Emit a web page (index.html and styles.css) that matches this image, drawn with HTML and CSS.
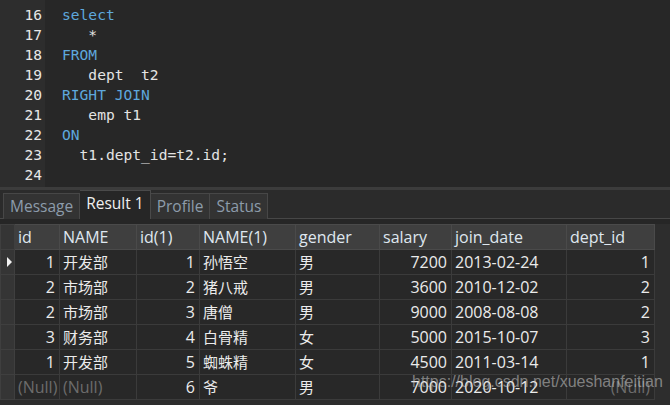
FILE: index.html
```
<!DOCTYPE html>
<html>
<head>
<meta charset="utf-8">
<link rel="stylesheet" href="styles.css">
</head>
<body>
<div class="app">
  <div class="editor">
    <div class="gutter">
      <div>16</div><div>17</div><div>18</div><div>19</div><div>20</div><div>21</div><div>22</div><div>23</div><div>24</div>
    </div>
    <div class="code">
      <div class="line"><span class="kw">select</span></div>
      <div class="line">   *</div>
      <div class="line"><span class="kw">FROM</span></div>
      <div class="line">   dept  t2</div>
      <div class="line"><span class="kw">RIGHT JOIN</span></div>
      <div class="line">   emp t1</div>
      <div class="line"><span class="kw">ON</span></div>
      <div class="line">  t1.dept_id=t2.id;</div>
      <div class="line"> </div>
    </div>
  </div>
  <div class="split"></div>
  <div class="tabbar">
    <div class="tab">Message</div>
    <div class="tab active">Result 1</div>
    <div class="tab">Profile</div>
    <div class="tab">Status</div>
  </div>
  <div class="gridwrap">
    <table class="grid">
      <colgroup>
        <col class="c0"><col class="c1"><col class="c2"><col class="c3"><col class="c4"><col class="c5"><col class="c6"><col class="c7"><col class="c8">
      </colgroup>
      <thead>
        <tr><th class="ind"></th><th>id</th><th>NAME</th><th>id(1)</th><th>NAME(1)</th><th>gender</th><th>salary</th><th>join_date</th><th>dept_id</th></tr>
      </thead>
      <tbody>
        <tr><td class="ind"><span class="arrow"></span></td><td class="num">1</td><td class="cjk">开发部</td><td class="num">1</td><td class="cjk">孙悟空</td><td class="cjk">男</td><td class="num">7200</td><td>2013-02-24</td><td class="num">1</td></tr>
        <tr><td class="ind"></td><td class="num">2</td><td class="cjk">市场部</td><td class="num">2</td><td class="cjk">猪八戒</td><td class="cjk">男</td><td class="num">3600</td><td>2010-12-02</td><td class="num">2</td></tr>
        <tr><td class="ind"></td><td class="num">2</td><td class="cjk">市场部</td><td class="num">3</td><td class="cjk">唐僧</td><td class="cjk">男</td><td class="num">9000</td><td>2008-08-08</td><td class="num">2</td></tr>
        <tr><td class="ind"></td><td class="num">3</td><td class="cjk">财务部</td><td class="num">4</td><td class="cjk">白骨精</td><td class="cjk">女</td><td class="num">5000</td><td>2015-10-07</td><td class="num">3</td></tr>
        <tr><td class="ind"></td><td class="num">1</td><td class="cjk">开发部</td><td class="num">5</td><td class="cjk">蜘蛛精</td><td class="cjk">女</td><td class="num">4500</td><td>2011-03-14</td><td class="num">1</td></tr>
        <tr><td class="ind"></td><td class="num null">(Null)</td><td class="null">(Null)</td><td class="num">6</td><td class="cjk">爷</td><td class="cjk">男</td><td class="num">7000</td><td>2020-10-12</td><td class="num null">(Null)</td></tr>
      </tbody>
    </table>
    <div class="watermark">https://blog.csdn.net/xueshanfeitian</div>
  </div>
</div>
</body>
</html>
```
FILE: styles.css
```
html, body {
  margin: 0;
  padding: 0;
}
body {
  width: 670px;
  height: 405px;
  overflow: hidden;
  background: #262626;
}
.app {
  display: flex;
  flex-direction: column;
  width: 670px;
  height: 405px;
}
.editor {
  display: flex;
  height: 187px;
  flex: none;
  background: #272727;
  font-family: "DejaVu Sans Mono", "Liberation Mono", monospace;
  font-size: 14.6px;
  line-height: 20px;
  color: #e4e4e4;
}
.gutter {
  width: 45px;
  box-sizing: border-box;
  padding: 5px 3px 0 0;
  background: #2d2d2d;
  text-align: right;
  color: #e8e8e8;
}
.code {
  padding: 5px 0 0 17px;
}
.line {
  white-space: pre;
  height: 20px;
}
.kw {
  color: #5ea8dd;
}
.split {
  height: 3px;
  flex: none;
  background: #3c3c3c;
}
.tabbar {
  display: flex;
  flex: none;
  align-items: flex-end;
  height: 29px;
  box-sizing: border-box;
  padding-left: 3px;
  background: #2b2b2b;
  border-bottom: 1px solid #474747;
  font-family: "Open Sans", "Noto Sans", sans-serif;
  font-size: 15.5px;
}
.tab {
  height: 26px;
  box-sizing: border-box;
  padding: 0 6px;
  line-height: 24px;
  background: #333333;
  border: 1px solid #474747;
  border-bottom: none;
  color: #8d9cab;
  margin-bottom: -1px;
}
.tab.active {
  height: 29px;
  line-height: 25px;
  background: #262626;
  color: #f0f0f0;
  position: relative;
  z-index: 1;
  border-color: #4a4a4a;
}
.tab + .tab {
  border-left: none;
}
.gridwrap {
  position: relative;
  margin-top: 5px;
  flex: 1;
  background: #2d2d2d;
}
.grid {
  border-collapse: collapse;
  table-layout: fixed;
  width: 654px;
  font-family: "Open Sans", "Noto Sans", "Noto Sans CJK SC", sans-serif;
  font-size: 16px;
  color: #ebebeb;
}
.c0 { width: 14px; }
.c1 { width: 45px; }
.c2 { width: 77px; }
.c3 { width: 63px; }
.c4 { width: 96px; }
.c5 { width: 84px; }
.c6 { width: 72px; }
.c7 { width: 115px; }
.c8 { width: 88px; }
.grid th, .grid td {
  height: 24px;
  padding: 0 4px 0 3px;
  border: 1px solid #3b3b3b;
  white-space: nowrap;
  overflow: hidden;
  line-height: 22px;
}
.grid th {
  background: #3f3f3f;
  font-weight: normal;
  text-align: left;
  color: #dfe7ef;
  border-color: #4a4a4a;
}
.grid td {
  background: #282828;
}
.grid .ind {
  background: #353535;
  padding: 0;
  border-color: #3f3f3f;
}
.grid td.num {
  text-align: right;
}
.grid td.cjk {
  font-size: 15px;
}
.grid td.null {
  color: #6c6c6c;
}
.arrow {
  display: block;
  width: 0;
  height: 0;
  margin-left: 6px;
  border-top: 5.5px solid transparent;
  border-bottom: 5.5px solid transparent;
  border-left: 5px solid #f2f2f2;
}
.watermark {
  position: absolute;
  left: 412px;
  top: 149px;
  font-family: "Liberation Sans", Arial, sans-serif;
  font-size: 16px;
  color: rgba(205, 205, 205, 0.55);
  white-space: nowrap;
}
```
